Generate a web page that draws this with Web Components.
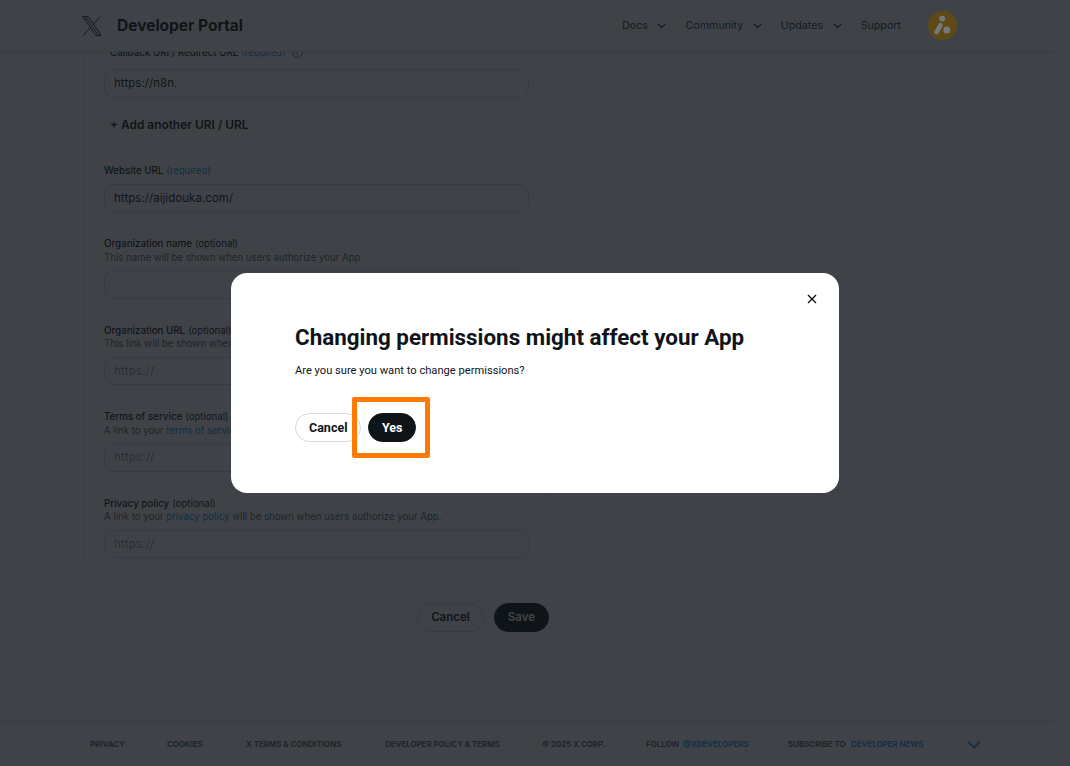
<!DOCTYPE html>
<html lang="en">
<head>
<meta charset="utf-8">
<title>Developer Portal</title>
<style>
  html, body { margin: 0; height: 100%; background: #fff; overflow: hidden; }
  body { font-family: Inter, "Liberation Sans", sans-serif; color: #0f1419; }
</style>
</head>
<body>
<x-app>
  <x-header slot="header">
    <x-nav-item menu>Docs</x-nav-item>
    <x-nav-item menu>Community</x-nav-item>
    <x-nav-item menu>Updates</x-nav-item>
    <x-nav-item>Support</x-nav-item>
  </x-header>

  <x-form-card>
    <x-field label="Callback URI / Redirect URL" note="(required)" value="https://n8n." info indent></x-field>
    <x-add-link>+ Add another URI / URL</x-add-link>
    <x-field label="Website URL" note="(required)" value="https://aijidouka.com/"></x-field>
    <x-field label="Organization name" tag="(optional)">This name will be shown when users authorize your App</x-field>
    <x-field label="Organization URL" tag="(optional)" placeholder="https://">This link will be shown when</x-field>
    <x-field label="Terms of service" tag="(optional)" placeholder="https://">A link to your <a>terms of service</a></x-field>
    <x-field label="Privacy policy" tag="(optional)" placeholder="https://">A link to your <a>privacy policy</a> will be shown when users authorize your App.</x-field>
  </x-form-card>
  <x-form-actions>
    <x-button>Cancel</x-button>
    <x-button primary>Save</x-button>
  </x-form-actions>

  <x-footer slot="footer"></x-footer>

  <x-modal slot="modal" heading="Changing permissions might affect your App">
    Are you sure you want to change permissions?
    <x-button slot="actions" small>Cancel</x-button>
    <x-highlight slot="actions"><x-button primary small>Yes</x-button></x-highlight>
  </x-modal>
</x-app>

<script>
// small helper so every class doesn't repeat the same three lines
class Base extends HTMLElement {
  constructor(html) {
    super();
    this.attachShadow({mode: "open"});
    this.shadowRoot.innerHTML = html;
  }
}

class XApp extends Base {
  constructor() {
    super(`
      <style>
        :host { display: flex; flex-direction: column; height: 100vh; padding-right: 15px; box-sizing: border-box; }
        main { flex: 1; min-height: 0; overflow: hidden; }
        .inner { margin-top: -6px; }
        /* dim layer of the dialog */
        .overlay {
          position: fixed; inset: 0; z-index: 1;
          background: rgba(15, 20, 25, .8);
          display: flex; align-items: flex-start; justify-content: center;
        }
      </style>
      <slot name="header"></slot>
      <main><div class="inner"><slot></slot></div></main>
      <slot name="footer"></slot>
      <div class="overlay"><slot name="modal"></slot></div>
    `);
  }
}

class XHeader extends Base {
  constructor() {
    super(`
      <style>
        :host { display: flex; align-items: center; height: 51px; border-bottom: 1px solid #cfd9de; padding-left: 82px; box-sizing: content-box; }
        svg.logo { width: 20px; height: 20px; fill: none; stroke: #0f1419; stroke-width: .9; margin-right: 15px; flex: none; }
        .title { font-size: 15.5px; font-weight: 700; letter-spacing: 0; }
        nav { margin-left: auto; display: flex; align-items: center; }
        .avatar { position: relative; z-index: 2; width: 29px; height: 29px; margin: 0 98px 0 27px; flex: none; }
      </style>
      <svg class="logo" viewBox="0 0 20 20"><path d="M.8.6h5.4l13 18.8h-5.4zM3.4.6l12.9 18.8M18.2.6l-7.4 8.2M9 11 1 19.4"/></svg>
      <span class="title">Developer Portal</span>
      <nav><slot></slot></nav>
      <svg class="avatar" viewBox="0 0 29 29">
        <circle cx="14.5" cy="14.5" r="14.5" fill="#5e4a17"/>
        <circle cx="14.2" cy="7.6" r="2.9" fill="#75797d"/>
        <line x1="12.6" y1="14.2" x2="8.6" y2="21" stroke="#75797d" stroke-width="4.6" stroke-linecap="round"/>
        <circle cx="18.8" cy="19" r="3.5" fill="#75797d"/>
      </svg>
    `);
  }
}

class XNavItem extends Base {
  constructor() {
    super(`
      <style>
        :host { display: inline-flex; align-items: center; font-size: 10.7px; color: #253341; }
        svg { width: 9px; height: 6px; margin: 0 19px 0 9.5px; fill: none; stroke: currentColor; stroke-width: 1.3; }
        :host(:not([menu])) svg { display: none; }
      </style>
      <slot></slot>
      <svg viewBox="0 0 9 6"><path d="M.7.9 4.5 4.7 8.3.9"/></svg>
    `);
  }
}

class XFormCard extends Base {
  constructor() {
    super(`
      <style>
        :host { display: block; width: 465px; box-sizing: border-box; margin-left: 84px; padding: 0 19px 22px; border: 1px solid #eff3f4; border-top: 0; border-radius: 0 0 16px 16px; box-shadow: 0 1px 6px rgba(15,20,25,.05); }
        ::slotted(x-field) { margin-bottom: 25px; }
        ::slotted(x-field[indent]), ::slotted(x-field:last-child) { margin-bottom: 0; }
      </style>
      <slot></slot>
    `);
  }
}

class XField extends Base {
  constructor() {
    super(`
      <style>
        :host { display: block; font-size: 9.65px; }
        .label { display: flex; align-items: center; gap: 3px; line-height: 13.5px; font-size: 9.75px; font-weight: 500; color: #0f1419; white-space: nowrap; }
        :host([indent]) .label { padding-left: 6px; margin-bottom: 9.5px; }
        .note { font-weight: 400; font-size: 9.5px; color: #1a8cd8; }
        .tag { font-weight: 400; font-size: 9.65px; color: #0f1419; }
        span:empty { display: none; }
        .help { line-height: 13.5px; color: #536471; white-space: nowrap; }
        ::slotted(a) { color: #1a8cd8; }
        .box { margin-top: 6px; height: 28.5px; box-sizing: border-box; border: 1px solid #cfd9de; border-radius: 10px; padding: 0 9px; display: flex; align-items: center; font-size: 11.5px; letter-spacing: .05px; color: #0f1419; }
        .box.empty { color: #8b98a5; letter-spacing: .2px; }
        svg { width: 11px; height: 11px; margin-left: 3px; fill: none; stroke: #536471; flex: none; }
      </style>
      <div class="label"><span id="name"></span><span class="note" id="note"></span><span class="tag" id="tag"></span></div>
      <div class="help" id="help"><slot></slot></div>
      <div class="box" id="box"></div>
    `);
  }
  connectedCallback() {
    const root = this.shadowRoot;
    root.getElementById("name").textContent = this.getAttribute("label");
    root.getElementById("note").textContent = this.getAttribute("note") || "";
    root.getElementById("tag").textContent = this.getAttribute("tag") || "";
    const box = root.getElementById("box");
    if (this.hasAttribute("value")) box.textContent = this.getAttribute("value");
    else { box.textContent = this.getAttribute("placeholder") || ""; box.classList.add("empty"); }
    // fields without help text keep the label right on the input
    if (!this.textContent.trim()) root.getElementById("help").style.display = "none";
    if (this.hasAttribute("info")) {
      root.querySelector(".label").insertAdjacentHTML("beforeend",
        '<svg viewBox="0 0 11 11"><circle cx="5.5" cy="5.5" r="4.9"/><path d="M5.5 4.8v3.6M5.5 2.6v1.2"/></svg>');
    }
  }
}

class XAddLink extends Base {
  constructor() {
    super(`
      <style>
        :host { display: block; margin: 17.5px 0 29px; padding-left: 6px; font-size: 11.9px; font-weight: 600; line-height: 20px; color: #0f1419; }
      </style>
      <slot></slot>
    `);
  }
}

class XFormActions extends Base {
  constructor() {
    super(`
      <style>
        :host { display: flex; justify-content: flex-end; gap: 10px; width: 465px; margin: 21.5px 0 0 84px; }
      </style>
      <slot></slot>
    `);
  }
}

class XButton extends Base {
  constructor() {
    super(`
      <style>
        :host { display: inline-flex; align-items: center; justify-content: center; height: 29px; box-sizing: border-box; padding: 0 13px; border: 1px solid #cfd9de; border-radius: 15px; font-size: 11.5px; font-weight: 600; color: #0f1419; background: #fff; white-space: nowrap; font-family: Inter, "Liberation Sans", sans-serif; }
        :host([primary]) { background: #0f1419; border-color: #0f1419; color: #fff; }
        :host([small]) { font-size: 12.5px; font-weight: 700; font-family: Roboto, "Liberation Sans", sans-serif; }
        :host([small][primary]) { padding: 0 12.5px; }
      </style>
      <slot></slot>
    `);
  }
}

class XModal extends Base {
  constructor() {
    super(`
      <style>
        :host { display: block; position: relative; width: 608px; height: 220px; box-sizing: border-box; margin-top: 273px; padding: 52px 64px 0; background: #fff; border-radius: 16px; font-family: Roboto, "Liberation Sans", sans-serif; color: #0f1419; }
        h2 { margin: 0; font-size: 22.4px; line-height: 24px; font-weight: 700; white-space: nowrap; }
        p { margin: 15px 0 0; font-size: 11.15px; line-height: 14px; }
        .actions { display: flex; gap: 7px; margin-top: 35px; }
        .close { position: absolute; top: 21px; right: 22px; width: 10px; height: 10px; fill: none; stroke: #0f1419; stroke-width: 1.4; }
      </style>
      <svg class="close" viewBox="0 0 10 10"><path d="M1 1l8 8M9 1l-8 8"/></svg>
      <h2 id="heading"></h2>
      <p><slot></slot></p>
      <div class="actions"><slot name="actions"></slot></div>
    `);
  }
  connectedCallback() {
    this.shadowRoot.getElementById("heading").textContent = this.getAttribute("heading");
  }
}

// orange annotation box drawn over the button
class XHighlight extends Base {
  constructor() {
    super(`
      <style>
        :host { display: inline-block; position: relative; }
        .ring { position: absolute; left: -16px; top: -16px; width: 78px; height: 61px; box-sizing: border-box; border: 5.5px solid #ff7a00; border-radius: 2px; pointer-events: none; }
      </style>
      <slot></slot>
      <div class="ring"></div>
    `);
  }
}

class XFooter extends Base {
  constructor() {
    super(`
      <style>
        :host { display: flex; align-items: center; height: 44px; border-top: 1px solid #cfd9de; padding-left: 90px; font-size: 7.9px; font-weight: 700; color: #536471; white-space: nowrap; text-transform: uppercase; }
        span { flex: none; }
        .blue { color: #1d9bf0; }
        svg { width: 14px; height: 9px; fill: none; stroke: #1d9bf0; stroke-width: 2; flex: none; }
      </style>
      <span style="width:77px">Privacy</span>
      <span style="width:79px">Cookies</span>
      <span style="width:139px">X Terms &amp; Conditions</span>
      <span style="width:157px">Developer Policy &amp; Terms</span>
      <span style="width:104px">© 2025 X Corp.</span>
      <span style="width:37px">Follow</span>
      <span style="width:105px" class="blue">@XDevelopers</span>
      <span style="width:63px">Subscribe to</span>
      <span style="width:116px" class="blue">Developer News</span>
      <svg viewBox="0 0 14 9"><path d="M1 1.5l6 6 6-6"/></svg>
    `);
  }
}

customElements.define("x-app", XApp);
customElements.define("x-header", XHeader);
customElements.define("x-nav-item", XNavItem);
customElements.define("x-form-card", XFormCard);
customElements.define("x-field", XField);
customElements.define("x-add-link", XAddLink);
customElements.define("x-form-actions", XFormActions);
customElements.define("x-button", XButton);
customElements.define("x-modal", XModal);
customElements.define("x-highlight", XHighlight);
customElements.define("x-footer", XFooter);
</script>
</body>
</html>
